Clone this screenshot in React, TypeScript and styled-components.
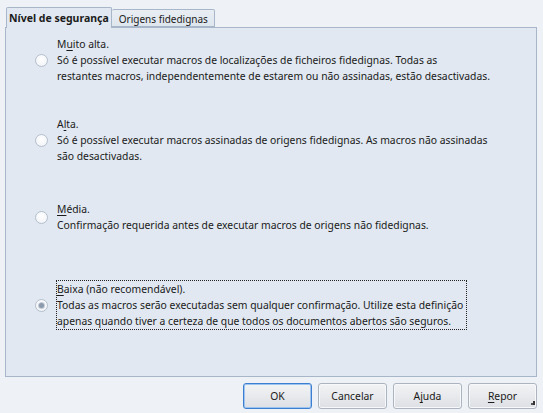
import React from "react";
import styled, { createGlobalStyle } from "styled-components";

const Global = createGlobalStyle`
  html, body { margin: 0; padding: 0; background: #eef1f6; }
  body { font-family: "Noto Sans", "Open Sans", sans-serif; font-size: 10.35px; color: #1b1b1b; }
`;

const Dialog = styled.div`
  width: 543px;
  height: 413px;
  box-sizing: border-box;
  padding: 7px 6px 0 5px;
  display: flex;
  flex-direction: column;
  position: relative;
`;

const TabBar = styled.div`
  display: flex;
  align-items: flex-end;
  height: 20px;
  padding-left: 1px;
  position: relative;
  z-index: 1;
`;

const Tab = styled.div<{ $active?: boolean }>`
  box-sizing: border-box;
  height: ${(p) => (p.$active ? "21px" : "18px")};
  margin-bottom: ${(p) => (p.$active ? "-1px" : "0")};
  padding: ${(p) => (p.$active ? "3px 2px 0 2px" : "2px 6px 0 7px")};
  border: 1px solid #a7b6c8;
  border-bottom: ${(p) => (p.$active ? "none" : "1px solid #a7b6c8")};
  border-left: ${(p) => (p.$active ? "1px solid #a7b6c8" : "none")};
  border-radius: 2px 2px 0 0;
  background: ${(p) => (p.$active ? "#e1e8f1" : "linear-gradient(#e9eef4, #dfe6ee)")};
  font-size: ${(p) => (p.$active ? "10.5px" : "10px")};
  font-weight: ${(p) => (p.$active ? 700 : 400)};
  line-height: 14px;
  white-space: nowrap;
`;

const Panel = styled.div`
  box-sizing: border-box;
  height: 350px;
  border: 1px solid #a7b6c8;
  background: #e1e8f1;
  padding-top: 7px;
  display: flex;
  flex-direction: column;
`;

const Option = styled.div<{ $top: number }>`
  display: flex;
  align-items: center;
  margin-top: ${(p) => p.$top}px;
  padding-left: 29px;
`;

const Radio = styled.span<{ $checked?: boolean }>`
  box-sizing: border-box;
  width: 13px;
  height: 13px;
  border-radius: 50%;
  border: 1px solid #b4bfcc;
  background: radial-gradient(circle at 50% 40%, #ffffff 0%, #f3f5f8 70%, #e4e8ee 100%);
  display: flex;
  align-items: center;
  justify-content: center;
  flex: none;
  margin-right: 8px;
  &::after {
    content: "";
    display: ${(p) => (p.$checked ? "block" : "none")};
    width: 5px;
    height: 5px;
    border-radius: 50%;
    background: #8d9aab;
    box-shadow: 0 0 0 1px #c3ccd8;
  }
`;

const Label = styled.div<{ $focused?: boolean }>`
  border: 1px dotted ${(p) => (p.$focused ? "#222" : "transparent")};
  line-height: 16px;
  white-space: nowrap;
  padding-right: 3px;
`;

const Key = styled.span`
  text-decoration: underline;
  text-underline-offset: 2px;
`;

const Footer = styled.div`
  display: flex;
  justify-content: flex-end;
  gap: 6px;
  padding-top: 6px;
`;

const Button = styled.button<{ $default?: boolean }>`
  box-sizing: border-box;
  width: 69px;
  height: 26px;
  font-family: inherit;
  font-size: 10.35px;
  color: #1b1b1b;
  border-radius: 3px;
  border: 1px solid ${(p) => (p.$default ? "#3c7fd1" : "#acb4bf")};
  box-shadow: ${(p) => (p.$default ? "inset 0 0 0 1px #9ec3ee" : "inset 0 0 0 1px #f7f8fa")};
  background: linear-gradient(#f2f3f5 0%, #e8eaed 50%, #dcdfe4 100%);
  padding: 0;
`;

const Grip = styled.svg`
  position: absolute;
  right: 8px;
  bottom: 6px;
`;

export default function App() {
  return (
    <>
      <Global />
      <Dialog>
        <TabBar>
          <Tab $active>Nível de segurança</Tab>
          <Tab>Origens fidedignas</Tab>
        </TabBar>
        <Panel>
          <Option $top={0}>
            <Radio />
            <Label>
              M<Key>u</Key>ito alta.
              <br />
              Só é possível executar macros de localizações de ficheiros fidedignas. Todas as
              <br />
              restantes macros, independentemente de estarem ou não assinadas, estão desactivadas.
            </Label>
          </Option>
          <Option $top={30}>
            <Radio />
            <Label>
              A<Key>l</Key>ta.
              <br />
              Só é possível executar macros assinadas de origens fidedignas. As macros não assinadas
              <br />
              são desactivadas.
            </Label>
          </Option>
          <Option $top={35}>
            <Radio />
            <Label>
              <Key>M</Key>édia.
              <br />
              Confirmação requerida antes de executar macros de origens não fidedignas.
            </Label>
          </Option>
          <Option $top={46}>
            <Radio $checked />
            <Label $focused>
              <Key>B</Key>aixa (não recomendável).
              <br />
              Todas as macros serão executadas sem qualquer confirmação. Utilize esta definição
              <br />
              apenas quando tiver a certeza de que todos os documentos abertos são seguros.
            </Label>
          </Option>
        </Panel>
        <Footer>
          <Button $default>OK</Button>
          <Button>Cancelar</Button>
          <Button>
            A<Key>j</Key>uda
          </Button>
          <Button>
            <Key>R</Key>epor
          </Button>
        </Footer>
        <Grip width="6" height="6" viewBox="0 0 6 6">
          <rect x="4" y="0" width="2" height="2" fill="#333" />
          <rect x="2" y="2" width="2" height="2" fill="#555" />
          <rect x="4" y="2" width="2" height="2" fill="#333" />
        </Grip>
      </Dialog>
    </>
  );
}
